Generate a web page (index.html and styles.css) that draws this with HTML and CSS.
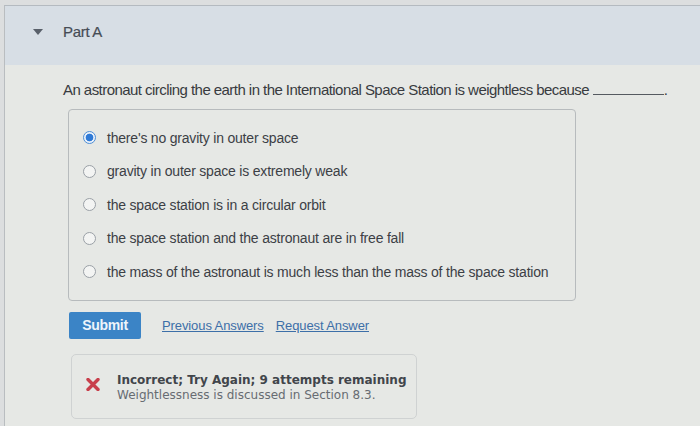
FILE: index.html
```html
<!DOCTYPE html>
<html lang="en">

<head>
	<meta charset="UTF-8">
	<meta name="viewport" content="width=device-width, initial-scale=1.0">
	<title>Part A</title>
	<link rel="stylesheet" href="styles.css">
</head>

<body>
	<section class="part">
		<header class="part-header">
			<span class="caret"></span>
			<h2 class="part-title">Part A</h2>
		</header>

		<div class="part-body">
			<p class="question">An astronaut circling the earth in the International Space Station is weightless because <span class="blank"></span>.</p>

			<div class="choices">
				<label class="choice"><span class="radio checked"></span>there's no gravity in outer space</label>
				<label class="choice"><span class="radio"></span>gravity in outer space is extremely weak</label>
				<label class="choice"><span class="radio"></span>the space station is in a circular orbit</label>
				<label class="choice"><span class="radio"></span>the space station and the astronaut are in free fall</label>
				<label class="choice"><span class="radio"></span>the mass of the astronaut is much less than the mass of the space station</label>
			</div>

			<div class="actions">
				<button class="submit">Submit</button>
				<a href="#" class="link">Previous Answers</a>
				<a href="#" class="link">Request Answer</a>
			</div>

			<div class="feedback">
				<svg class="cross" width="14" height="13" viewBox="0 0 14 13">
					<path d="M2 1.5 L12 11.5 M12 1.5 L2 11.5" stroke="#c8404c" stroke-width="3.4" stroke-linecap="round" />
				</svg>
				<div class="feedback-text">
					<strong>Incorrect; Try Again; 9 attempts remaining</strong>
					<span>Weightlessness is discussed in Section 8.3.</span>
				</div>
			</div>
		</div>
	</section>
</body>

</html>
```

FILE: styles.css
```css
* {
	margin: 0;
	padding: 0;
	box-sizing: border-box;
}

body {
	background-color: #dcdedf;
	font-family: "Liberation Sans", Arial, sans-serif;
	color: #3a3d42;
	padding: 5px 0 0 4px;
	min-height: 100vh;
}

.part {
	min-height: calc(100vh - 5px);
	background-color: #e6e8e5;
	border-top: 1px solid #b4bac0;
	border-left: 1px solid #b9bdc0;
}

.part-header {
	display: flex;
	align-items: center;
	height: 59px;
	padding: 0 0 8px 28px;
	background-color: #d7dee5;
}

.caret {
	width: 0;
	height: 0;
	border-left: 5px solid transparent;
	border-right: 5px solid transparent;
	border-top: 6px solid #59606a;
	margin-right: 20px;
}

.part-title {
	font-size: 15px;
	font-weight: normal;
	color: #464c55;
	letter-spacing: -0.3px;
	-webkit-text-stroke: 0.2px #464c55;
}

.part-body {
	padding: 16px 0 0 58px;
}

.question {
	font-size: 15px;
	letter-spacing: -0.55px;
	color: #383b40;
}

.blank {
	display: inline-block;
	width: 71px;
	border-bottom: 1px solid #555a60;
}

.choices {
	display: flex;
	flex-direction: column;
	width: 508px;
	margin: 11px 0 0 5px;
	padding: 11px 0 11px 14px;
	border: 1px solid #b7bbbd;
	border-radius: 4px;
}

.choice {
	display: flex;
	align-items: center;
	height: 33.5px;
	font-size: 14px;
	letter-spacing: -0.2px;
	color: #3c4045;
}

.radio {
	width: 13px;
	height: 13px;
	border: 1px solid #9aa0a6;
	border-radius: 50%;
	background-color: #f3f4f3;
	margin-right: 11px;
	flex-shrink: 0;
}

.radio.checked {
	border: 1.5px solid #4f8fd6;
	background: radial-gradient(circle, #2f7ad6 0 3.5px, #eaf1fa 4.2px);
}

.actions {
	display: flex;
	align-items: center;
	margin: 11px 0 0 6px;
}

.submit {
	width: 72px;
	height: 27px;
	font-family: "Liberation Sans", Arial, sans-serif;
	font-size: 14px;
	font-weight: bold;
	letter-spacing: -0.3px;
	color: #eef5fb;
	background-color: #3b84c6;
	border: none;
	border-radius: 2px;
	margin-right: 21px;
}

.link {
	font-size: 13px;
	color: #3d6fa8;
	margin-right: 12px;
	letter-spacing: -0.1px;
}

.feedback {
	display: flex;
	align-items: flex-start;
	width: 346px;
	margin: 15px 0 0 8px;
	padding: 18px 0 15px 14px;
	border: 1px solid #cfd2d2;
	border-radius: 5px;
}

.cross {
	margin: 5px 17px 0 0;
}

.feedback-text {
	display: flex;
	flex-direction: column;
	font-family: "DejaVu Sans", Verdana, sans-serif;
	font-size: 12px;
	line-height: 15px;
	white-space: nowrap;
}

.feedback-text strong {
	color: #41454b;
}

.feedback-text span {
	color: #676c72;
}
```
